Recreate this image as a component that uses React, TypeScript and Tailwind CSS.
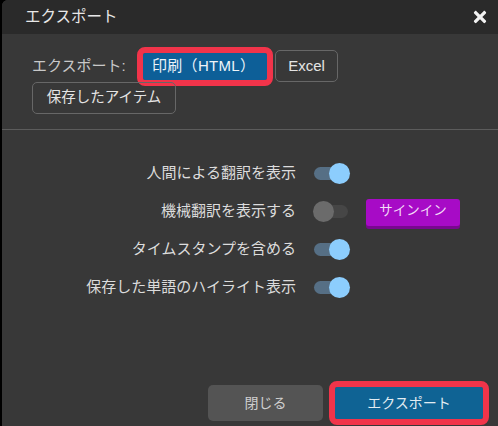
import { FaTimes } from 'react-icons/fa';

type ToggleProps = { on: boolean };

function Toggle({ on }: ToggleProps) {
  return (
    <div
      className={`relative h-[13px] w-[34px] rounded-full ${on ? 'bg-[#566f85]' : 'bg-[#464646]'}`}
    >
      <div
        className={`absolute top-[-4px] h-[21px] w-[21px] rounded-full ${
          on ? 'right-[-2px] bg-[#8ccdfd]' : 'left-[-1px] bg-[#6b6b6b]'
        }`}
      />
    </div>
  );
}

const options = [
  { label: '人間による翻訳を表示', on: true, signIn: false },
  { label: '機械翻訳を表示する', on: false, signIn: true },
  { label: 'タイムスタンプを含める', on: true, signIn: false },
  { label: '保存した単語のハイライト表示', on: true, signIn: false },
];

export default function App() {
  return (
    <div
      className="h-[426px] w-[498px] overflow-hidden bg-black pl-[2px]"
      style={{ fontFamily: '"Liberation Sans", "Noto Sans CJK JP", sans-serif' }}
    >
      <div className="flex h-full flex-col overflow-hidden rounded-tl-[6px] bg-[#383838] text-[#dedede]">
        {/* Title bar */}
        <div className="flex h-[34px] items-center justify-between bg-[#2a2a2a] pl-[23px] pr-[9px]">
          <span className="text-[15.5px] text-[#e8e8e8]">エクスポート</span>
          <FaTimes className="text-[#f2f2f2]" size={18} />
        </div>

        {/* Format selection */}
        <div className="pl-[30px] pt-[16px]">
          <div className="flex h-[32px] items-center">
            <span className="w-[111px] text-[15px] text-[#c8c8c8]">エクスポート:</span>
            <button className="h-[27px] w-[124px] rounded-[2px] bg-[#0d5f98] pl-[9px] text-left text-[15px] tracking-[0.3px] text-[#eef4f8] outline outline-[6px] outline-[#f1344a]">
              印刷（HTML）
            </button>
            <button className="ml-[8px] h-[32px] w-[63px] rounded-[5px] border border-[#676767] text-[15px] text-[#e4e4e4]">
              Excel
            </button>
          </div>
          <button className="h-[32px] w-[144px] rounded-[5px] border border-[#676767] text-[14.5px] text-[#e4e4e4]">
            保存したアイテム
          </button>
        </div>

        <div className="mt-[15px] h-px bg-[#5c5c5c]" />

        {/* Display options */}
        <div className="pt-[24px]">
          {options.map((opt) => (
            <div key={opt.label} className="flex h-[38px] items-center">
              <span className="w-[294px] text-right text-[15px] text-[#dcdcdc]">{opt.label}</span>
              <div className="ml-[18px]">
                <Toggle on={opt.on} />
              </div>
              {opt.signIn && (
                <button className="ml-[18px] mt-[3px] h-[27px] w-[94px] rounded-[3px] bg-[#a70bc6] pb-[2px] text-[13.5px] text-[#f3dcf7] shadow-[0_3px_0_#78088f]">
                  サインイン
                </button>
              )}
            </div>
          ))}
        </div>

        {/* Footer */}
        <div className="mt-auto flex items-center justify-end gap-[12px] pb-[5px] pr-[15px]">
          <button className="h-[36px] w-[115px] rounded-[5px] bg-[#545454] text-[14px] text-[#cfcfcf]">
            閉じる
          </button>
          <button className="h-[32px] w-[148px] rounded-[2px] bg-[#0f6394] text-[14px] text-[#e2ecf2] outline outline-[6px] outline-[#f1344a]">
            エクスポート
          </button>
        </div>
      </div>
    </div>
  );
}
